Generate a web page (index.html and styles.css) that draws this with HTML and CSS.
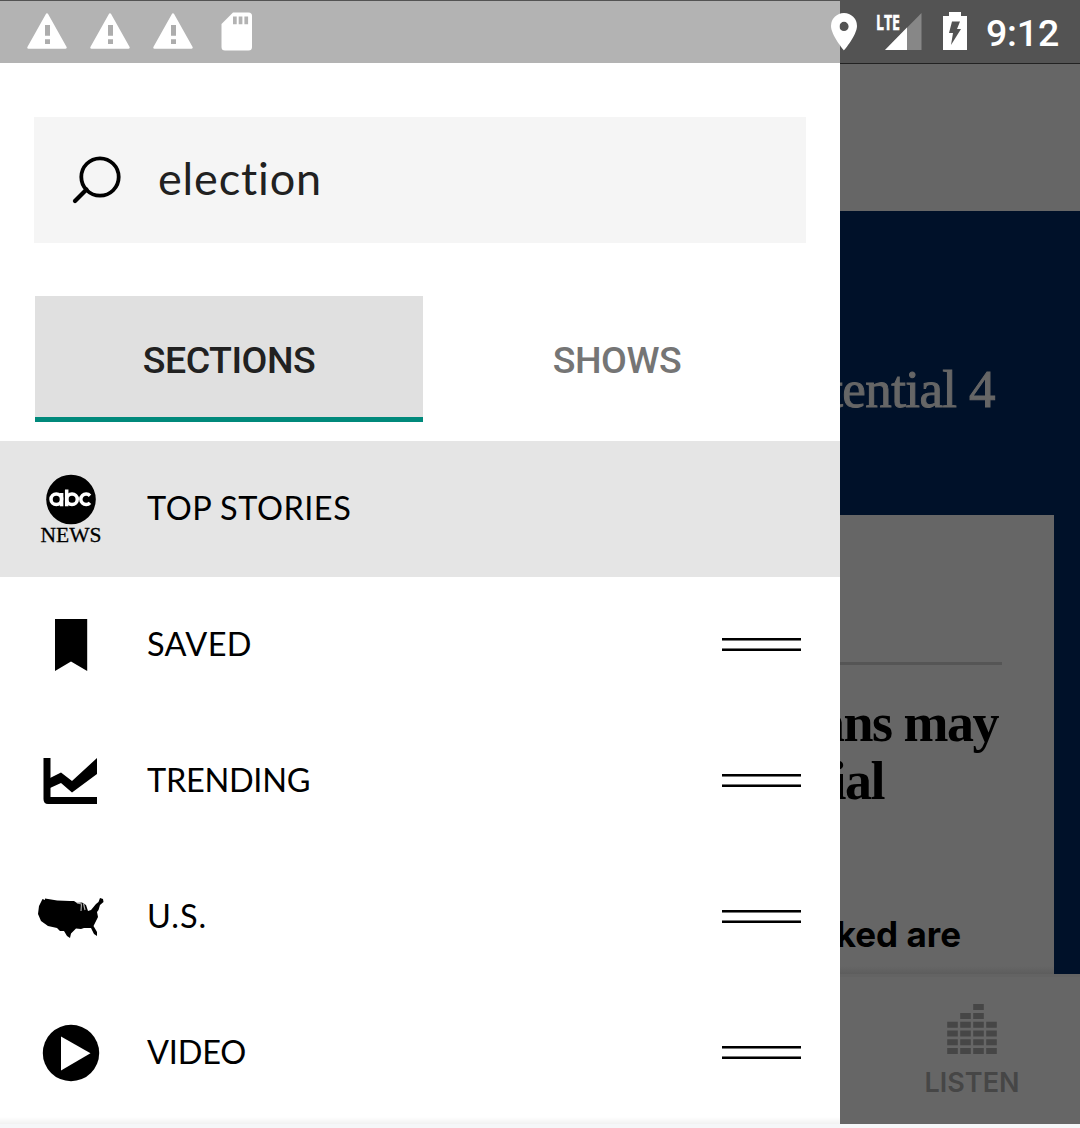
FILE: index.html
```html
<!DOCTYPE html>
<html lang="en">
<head>
<meta charset="utf-8">
<title>ABC News</title>
<link rel="stylesheet" href="styles.css">
</head>
<body>
<div class="screen">
  <aside class="drawer">
    <div class="search">
      <svg class="search-icon" width="52" height="52" viewBox="0 0 52 52"><circle cx="29" cy="23" r="18.7" fill="none" stroke="#000" stroke-width="3.8"/><path d="M15.5 35.5L4 47" stroke="#000" stroke-width="4.2" stroke-linecap="round"/></svg>
      <span class="query">election</span>
    </div>
    <div class="tabs">
      <div class="tab tab-active">SECTIONS</div>
      <div class="tab">SHOWS</div>
    </div>
    <nav class="menu">
      <div class="row row-active">
        <svg class="icon" width="68" height="72" viewBox="0 0 68 72"><circle cx="34" cy="26.500" r="24.800"/><g fill="none" stroke="#fff" stroke-width="3.500"><circle cx="19.300" cy="26.300" r="5.300"/><path d="M24.600 20V33.300"/><circle cx="35" cy="26.300" r="5.300"/><path d="M29.700 16.500V33.300"/><path d="M53 22.700A5.300 5.300 0 1 0 53 29.900"/></g><text class="logo-news" x="3.500" y="69" textLength="61" lengthAdjust="spacingAndGlyphs">NEWS</text></svg>
        <span class="label l-top">TOP STORIES</span>
      </div>
      <div class="row">
        <svg class="icon" width="68" height="72" viewBox="0 0 68 72"><path d="M18 10H50.200V62L34 52.500L18 62Z"/></svg>
        <span class="label l-saved">SAVED</span><i class="handle"></i>
      </div>
      <div class="row">
        <svg class="icon" width="68" height="72" viewBox="0 0 68 72"><path d="M6.500 13H13.500V52H60V59H11Q6.500 59 6.500 54Z"/><path d="M13 33L24 27.500L35 36L60 13V29L35 47.500L24 38L13 43Z"/></svg>
        <span class="label l-trend">TRENDING</span><i class="handle"></i>
      </div>
      <div class="row">
        <svg class="icon" width="68" height="72" viewBox="0 0 68 72"><path d="M5.500 18L8 19V17.500Q22 20.500 37 20L40 22L45 21.500L49 24L51 30L54 29L59 23L61.500 21L63 17L66 18L66.500 21L63 24L61.500 29L60 31L61 36L56.500 45L60 51V55L57 53L54 47L47 47L44 48L39 47.500L34 52.500L33 57L30 55L27 50L23 50L20 47L11 45L4 40L1 33L2 25Z"/><path d="M40 22L44.500 23L44 30M46.500 22.500L48 29" fill="none" stroke="#aaa" stroke-width="1.200"/></svg>
        <span class="label l-us">U.S.</span><i class="handle"></i>
      </div>
      <div class="row">
        <svg class="icon" width="68" height="72" viewBox="0 0 68 72"><circle cx="34" cy="36" r="28.200"/><path d="M24 19.500V53.500L53.500 36.300Z" fill="#fff"/></svg>
        <span class="label l-video">VIDEO</span><i class="handle"></i>
      </div>
    </nav>
  </aside>
  <main class="behind">
    <div class="top"></div>
    <section class="feed">
      <div class="hero"><span>tential 4</span></div>
      <article class="card">
        <div class="rule"></div>
        <div class="head h1"><span>ans may</span></div>
        <div class="head h2"><span>ial</span></div>
        <div class="text"><span>ked are</span></div>
      </article>
    </section>
    <footer class="listen">
      <svg width="52" height="52" viewBox="0 0 52 52" fill="#464646"><path d="M27.200 0h10.600v6h-10.600zM14.200 9h10.600v6h-10.600zM27.200 9h10.600v6h-10.600z"/><path d="M1.200 17.700h10.600v6h-10.600zM14.200 17.700h10.600v6h-10.600zM27.200 17.700h10.600v6h-10.600zM40.200 17.700h10.600v6h-10.600zM1.200 26.400h10.600v6h-10.600zM14.200 26.400h10.600v6h-10.600zM27.200 26.400h10.600v6h-10.600zM40.200 26.400h10.600v6h-10.600zM1.200 35.200h10.600v6h-10.600zM14.200 35.200h10.600v6h-10.600zM27.200 35.200h10.600v6h-10.600zM40.200 35.200h10.600v6h-10.600zM1.200 44h10.600v6h-10.600zM14.200 44h10.600v6h-10.600zM27.200 44h10.600v6h-10.600zM40.200 44h10.600v6h-10.600z"/></svg>
      <span>LISTEN</span>
    </footer>
  </main>
  <div class="edge"></div>
  <header class="status">
    <svg class="warn" width="40" height="38" viewBox="0 0 40 38"><path d="M20 1.500L38.500 34.500H1.500Z" fill="#fff" stroke="#fff" stroke-width="2.500" stroke-linejoin="round"/><path d="M18 12h5v10.700h-5zM18 26.300h5v4.600h-5z" fill="#adadad"/></svg>
    <svg class="warn" width="40" height="38" viewBox="0 0 40 38"><path d="M20 1.500L38.500 34.500H1.500Z" fill="#fff" stroke="#fff" stroke-width="2.500" stroke-linejoin="round"/><path d="M18 12h5v10.700h-5zM18 26.300h5v4.600h-5z" fill="#adadad"/></svg>
    <svg class="warn" width="40" height="38" viewBox="0 0 40 38"><path d="M20 1.500L38.500 34.500H1.500Z" fill="#fff" stroke="#fff" stroke-width="2.500" stroke-linejoin="round"/><path d="M18 12h5v10.700h-5zM18 26.300h5v4.600h-5z" fill="#adadad"/></svg>
    <svg class="card-icon" width="32" height="40" viewBox="0 0 32 40"><path d="M12 .5H27.500Q31 .5 31 4V35Q31 38.500 27.500 38.500H4Q.5 38.500 .5 35V12Z" fill="#fff"/><path d="M12 4.500h3.700v7.700h-3.700zM17.700 4.500h3.700v7.700h-3.700zM23.400 4.500h3.700v7.700h-3.700z" fill="#b3b3b3"/></svg>
    <svg class="pin" width="26" height="38" viewBox="0 0 26 38"><path fill="#fff" fill-rule="evenodd" d="M13 0A13 13 0 0 0 0 13C0 22 13 37.500 13 37.500S26 22 26 13A13 13 0 0 0 13 0ZM13 8.800A4.600 4.600 0 1 1 13 18A4.600 4.600 0 0 1 13 8.800Z"/></svg>
    <svg class="signal" width="46" height="38" viewBox="0 0 46 38"><path d="M45.500 0V37H9Z" fill="#878787"/><path d="M31 14.500V37H9Z" fill="#fff"/><text class="lte" x="0" y="16.500" textLength="24" lengthAdjust="spacingAndGlyphs">LTE</text></svg>
    <svg class="battery" width="24" height="38" viewBox="0 0 24 38"><path d="M6 0H18V4H24V38H0V4H6Z" fill="#fff"/><path d="M9 9.500H17L14 17H18L8 33L10 21H6Z" fill="#535353"/></svg>
    <span class="clock">9:12</span>
  </header>
</div>
</body>
</html>
```
FILE: styles.css
```css
* { box-sizing: border-box; }
body { margin: 0; }
.screen {
  position: relative;
  display: grid;
  grid-template-columns: 840px 240px;
  grid-template-rows: 1124px 4px;
  width: 1080px;
  height: 1128px;
  overflow: hidden;
  background: #fff;
}
svg { display: block; flex: none; overflow: visible; }

.drawer {
  display: flex;
  flex-direction: column;
  border-top: 63px solid #b3b3b3;
  background: linear-gradient(#fff, #f1f1f1) bottom / 100% 7px no-repeat #fff;
}
.search {
  display: flex;
  align-items: center;
  height: 126px;
  margin: 54px 34px 0;
  padding-left: 37px;
  background: #f5f5f5;
}
.query {
  margin: -4px 0 0 35px;
  font: 45px Lato, sans-serif;
  font-variant-ligatures: none;
  letter-spacing: 0.850px;
  color: #212121;
}
.tabs { display: flex; height: 126px; margin: 53px 29px 19px 35px; }
.tab {
  display: flex;
  flex: none;
  align-items: center;
  justify-content: center;
  width: 388px;
  padding-top: 7px;
  border-bottom: 5px solid transparent;
  font: 500 37.500px Roboto, sans-serif;
  letter-spacing: -0.500px;
  color: #757575;
}
.tab-active { background: #e0e0e0; border-color: #00897b; color: #212121; }
.row {
  display: flex;
  align-items: center;
  height: 136px;
  padding: 0 39px 0 37px;
}
.row-active { background: #e5e5e5; }
.label {
  margin-left: 42px;
  padding-bottom: 4px;
  font: 32.500px Lato, sans-serif;
  color: #000;
  white-space: nowrap;
}
.l-top { letter-spacing: 0.500px; }
.l-saved { letter-spacing: 0.400px; }
.l-trend { letter-spacing: -0.300px; }
.l-us { letter-spacing: 1px; }
.l-video { letter-spacing: -0.200px; }
.handle {
  width: 79px;
  height: 13px;
  margin: 0 0 1px auto;
  border: solid #000;
  border-width: 2px 0;
  box-shadow: inset 0 1px #777, inset 0 -1px #777;
}
.logo-news { font: 22px "Liberation Serif", serif; stroke: #000; stroke-width: 0.300px; }

.behind { display: flex; flex-direction: column; overflow: hidden; background: #666; white-space: nowrap; }
.top { height: 211px; border-top: 63px solid #535353; box-shadow: inset 0 1px #222; }
.feed { height: 763px; padding-right: 26px; background: #001129; }
.hero, .head, .text { display: flex; justify-content: flex-end; width: 100%; }
.hero {
  align-items: center;
  height: 304px;
  padding: 51px 59px 0 0;
  font: 53px "Liberation Serif", serif;
  letter-spacing: -0.600px;
  color: #666;
  -webkit-text-stroke: 1px #666;
}
.card {
  height: 459px;
  padding: 147px 52px 0 0;
  background: linear-gradient(#666, #5d5d5d) bottom / 100% 8px no-repeat #666;
}
.rule { height: 3px; background: #555; }
.head, .text { color: #000; }
.head { height: 58px; font: bold 54px/58px "Liberation Serif", serif; letter-spacing: -1.500px; }
.h1 { margin-top: 29px; padding-right: 4px; }
.h2 { padding-right: 118px; }
.text { margin-top: 98px; padding-right: 41px; font: 700 35px/52px Inter, sans-serif; }
.listen {
  display: flex;
  flex-direction: column;
  align-items: center;
  height: 150px;
  padding: 30px 0 0 24px;
  border-top: 3px solid #636363;
}
.listen svg { margin-top: -3px; }
.listen span { margin-top: 10px; font: 600 27px/34px Inter, sans-serif; color: #464646; }
.edge { grid-column: 1 / 3; background: #f5f6f8; }

.status {
  position: absolute;
  inset: 0 0 auto 0;
  display: flex;
  align-items: flex-start;
  height: 63px;
  padding: 12px 0 0 27px;
  border-top: 1px solid #535353;
  color: #fff;
}
.warn { margin-right: 23px; }
.card-icon { margin: -1px 0 0 5px; }
.pin { margin-left: 578px; }
.signal { margin-left: 19px; }
.lte { font: bold 21px "Open Sans", sans-serif; fill: #fff; stroke: #fff; stroke-width: 0.500px; }
.battery { margin: -1px 0 0 21px; }
.clock { margin: -2px 0 0 19px; font: 500 37.500px/45px Roboto, sans-serif; letter-spacing: -0.200px; }
```
